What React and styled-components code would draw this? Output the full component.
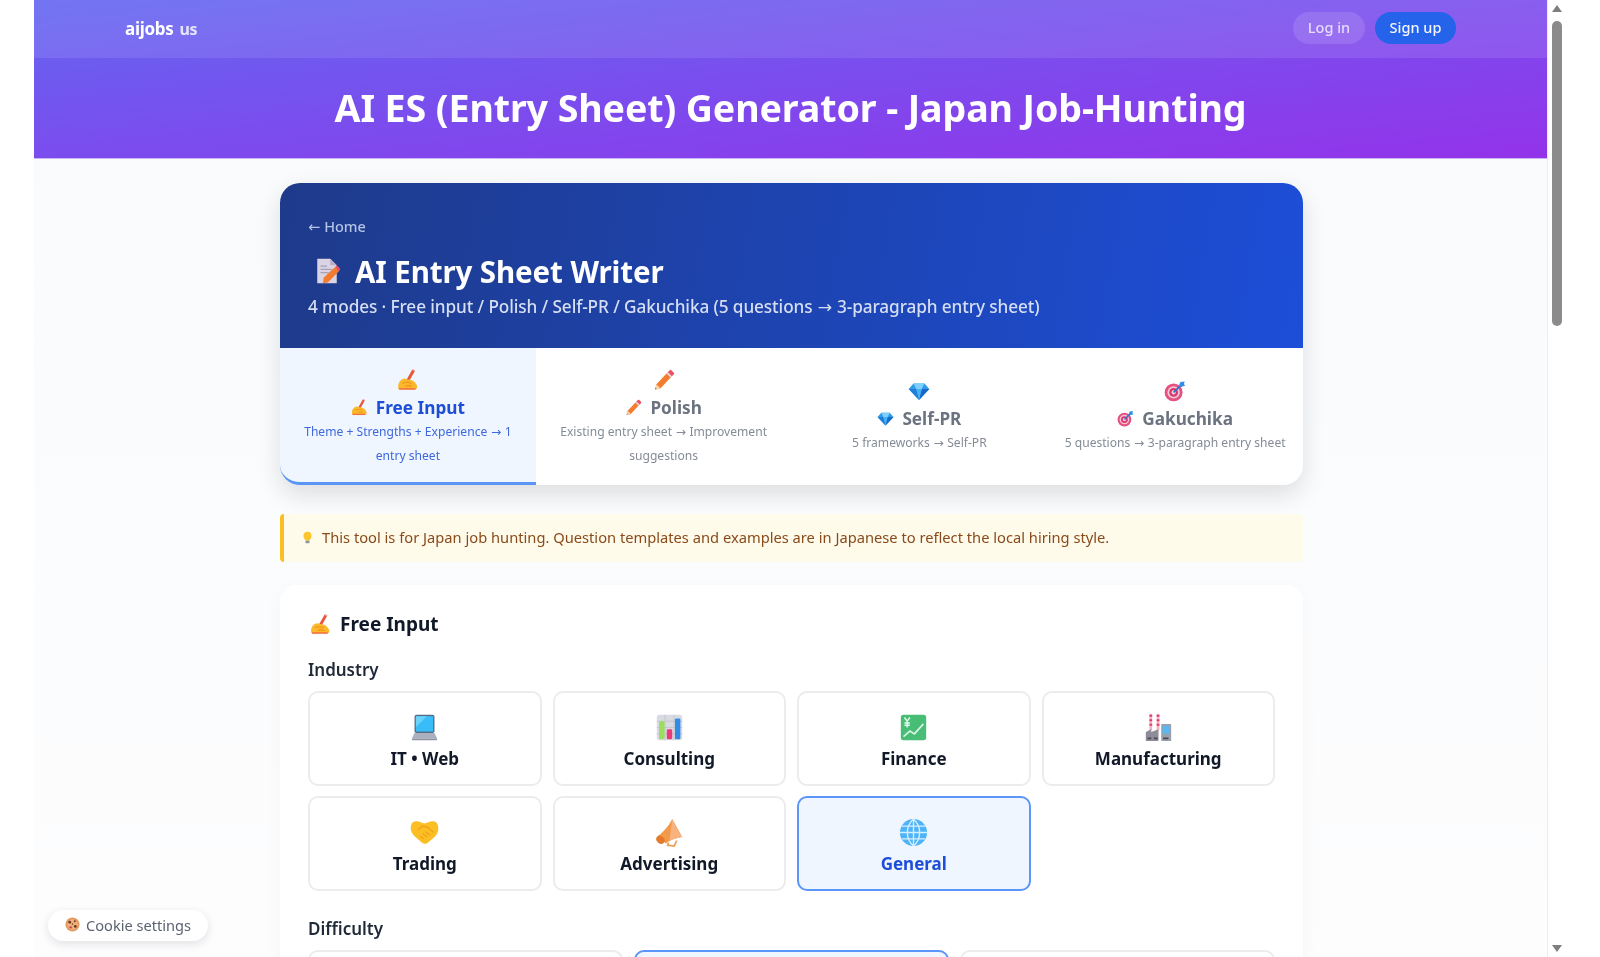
import React from "react";
import styled, { createGlobalStyle } from "styled-components";

const Global = createGlobalStyle`
  html, body { margin: 0; padding: 0; height: 957px; overflow: hidden; background: #fff; }
  * { box-sizing: border-box; }
  body { font-family: "Noto Sans", "Open Sans", "Liberation Sans", sans-serif; }
`;

const Shell = styled.div`
  display: flex;
  height: 957px;
  width: 1600px;
  overflow: hidden;
  position: relative;
  background: #fff;
  filter: blur(0.35px);
`;
const Gutter = styled.div`
  flex: 0 0 34px;
`;
const Page = styled.main`
  flex: 0 0 1514px;
  height: 957px;
  overflow: hidden;
  background: linear-gradient(180deg, #f8fafc 0, #fbfcfd 500px, #fdfdfe 100%);
  border-right: 1px solid #eceaf8;
`;
const Banner = styled.header`
  background: linear-gradient(to bottom right, #6366f1, #9333ea);
  border-bottom: 1px solid #c9b6f5;
`;
const Nav = styled.nav`
  height: 58px;
  display: flex;
  align-items: center;
  justify-content: space-between;
  padding: 0 91px 2px;
  background: rgba(255, 255, 255, 0.1);
`;
const Logo = styled.a`
  font-size: 17px;
  font-weight: 700;
  color: #fff;
  letter-spacing: -0.3px;
  display: flex;
  align-items: baseline;
  gap: 6px;
`;
const LogoTag = styled.span`
  font-size: 16px;
  font-weight: 700;
  color: #e6e4fd;
`;
const NavActions = styled.div`
  display: flex;
  gap: 10px;
`;
const Pill = styled.button`
  height: 32px;
  width: ${(p) => (p.$primary ? "81px" : "72px")};
  border: 0;
  border-radius: 16px;
  font: 500 14.5px "Noto Sans", sans-serif;
  color: ${(p) => (p.$primary ? "#f2f6ff" : "#e6dcfd")};
  background: ${(p) => (p.$primary ? "#2563eb" : "rgba(255,255,255,.12)")};
  padding: 0 0 3px;
`;
const HeroTitle = styled.h1`
  margin: 0;
  height: 100px;
  display: flex;
  align-items: center;
  justify-content: center;
  color: #fff;
  font-size: 37.6px;
  font-weight: 700;
  letter-spacing: -0.1px;
  padding-bottom: 1px;
`;
const Content = styled.div`
  width: 1023px;
  margin: 24px 0 0 246px;
`;
const ToolCard = styled.section`
  border-radius: 20px;
  background: #fff;
  box-shadow: 0 10px 24px rgba(15, 23, 42, 0.13);
`;
const ToolHead = styled.div`
  height: 165px;
  padding: 33px 28px 0;
  border-radius: 20px 20px 0 0;
  background: linear-gradient(100deg, #1e3a8a 0%, #1d4ed8 100%);
`;
const Back = styled.a`
  display: block;
  font-size: 14.5px;
  line-height: 20px;
  color: #b4c4e6;
  font-weight: 500;
`;
const ToolTitle = styled.h2`
  margin: 14px 0 0;
  display: flex;
  align-items: center;
  gap: 15px;
  padding-left: 6px;
  height: 40px;
  font-size: 29.5px;
  font-weight: 700;
  color: #fff;
  letter-spacing: -0.1px;
`;
const ToolSub = styled.p`
  margin: 4px 0 0;
  font-size: 17.2px;
  line-height: 24px;
  color: #d5def3;
  font-weight: 500;
  letter-spacing: -0.1px;
`;
const ArrowGlyph = styled.span`
  display: inline-block;
  margin: 0 0.3em;
  font-family: "DejaVu Sans", sans-serif;
`;
const BackArrow = styled.span`
  display: inline-block;
  margin-right: 4px;
  font-family: "DejaVu Sans", sans-serif;
`;
const Tabs = styled.div`
  display: grid;
  grid-template-columns: repeat(4, 1fr);
  height: 137px;
`;
const Tab = styled.button`
  border: 0;
  padding: 5px 16px 0;
  margin: 0;
  background: ${(p) => (p.$active ? "#eff6ff" : "transparent")};
  border-bottom: 3px solid ${(p) => (p.$active ? "#5b95f7" : "transparent")};
  border-radius: ${(p) => (p.$active ? "0 0 0 20px" : "0")};
  display: flex;
  flex-direction: column;
  align-items: center;
  justify-content: center;
  font-family: inherit;
`;
const TabLabel = styled.span`
  display: flex;
  align-items: center;
  gap: 8px;
  font-size: 17.2px;
  font-weight: 700;
  line-height: 25px;
  margin-top: 4px;
  color: ${(p) => (p.$active ? "#1d4ed8" : "#6b7280")};
`;
const DescLine = styled.span`
  display: block;
  white-space: nowrap;
  font-size: 12.1px;
  line-height: 23px;
  color: ${(p) => (p.$active ? "#3f68dc" : "#858b96")};
`;
const Notice = styled.div`
  height: 48px;
  margin-top: 29px;
  display: flex;
  align-items: center;
  gap: 8px;
  padding: 0 0 2px 17px;
  border-left: 4px solid #fbbf24;
  border-radius: 4px;
  background: #fffbeb;
  color: #8a4a1a;
  font-size: 14.7px;
`;
const FormCard = styled.section`
  margin-top: 23px;
  padding: 22px 28px 0;
  height: 500px;
  background: #fff;
  border-radius: 16px;
  box-shadow: 0 4px 18px rgba(15, 23, 42, 0.035);
`;
const FormTitle = styled.h3`
  margin: 0;
  display: flex;
  align-items: center;
  gap: 9px;
  padding-left: 2px;
  height: 34px;
  font-size: 19px;
  font-weight: 700;
  color: #111827;
`;
const Label = styled.div`
  font-size: 17px;
  font-weight: 600;
  line-height: 24px;
  color: #1f2937;
  margin-top: ${(p) => p.$top}px;
  margin-bottom: 9px;
`;
const Grid = styled.div`
  display: grid;
  grid-template-columns: repeat(${(p) => p.$cols}, 1fr);
  gap: 10px 11px;
`;
const Tile = styled.button`
  height: ${(p) => p.$h || 95}px;
  padding: 6px 0 0;
  border: 2px solid ${(p) => (p.$active ? "#5b95f7" : "#ececee")};
  border-radius: 10px;
  background: ${(p) => (p.$active ? "#eff6ff" : "#fff")};
  color: ${(p) => (p.$active ? "#1d4ed8" : "#111827")};
  display: flex;
  flex-direction: column;
  align-items: center;
  justify-content: center;
  gap: 5px;
  font: 700 17px/24px "Noto Sans", sans-serif;
`;
const Rail = styled.aside`
  flex: 1;
  display: flex;
  flex-direction: column;
  align-items: flex-start;
  padding: 5px 0 5px 4px;
`;
const Arrow = styled.span`
  width: 0;
  height: 0;
  margin-left: 0;
  border-left: 5px solid transparent;
  border-right: 5px solid transparent;
  ${(p) => (p.$down ? "border-top: 7px solid #7f7f7f; margin-top: auto;" : "border-bottom: 7px solid #7f7f7f;")}
`;
const Thumb = styled.span`
  width: 10px;
  height: 305px;
  margin-top: 9px;
  border-radius: 5px;
  background: #8b8b8b;
`;
const Cookie = styled.button`
  position: absolute;
  left: 48px;
  top: 910px;
  height: 31px;
  width: 160px;
  display: flex;
  align-items: center;
  justify-content: center;
  gap: 6px;
  padding: 0 0 2px;
  border: 0;
  border-radius: 16px;
  background: #fff;
  box-shadow: 0 3px 10px rgba(15, 23, 42, 0.12);
  color: #5b6270;
  font: 400 14.6px "Noto Sans", sans-serif;
`;
const Ico = styled.svg`
  display: block;
  flex: none;
`;

const drawings = {
  hand: (
    <>
      <path d="M22 1l4 2-9 16-4-2z" fill="#e8583a" />
      <path d="M22 1l1-1 4 2-1 1z" fill="#f2a3a0" />
      <path d="M2 29c-1-5 0-10 4-13 3-2 6-3 8-1l5 1c4 0 7 3 9 6 2 3 2 7-1 7z" fill="#fbb82b" />
      <path d="M8 21c4-2 9-2 13 0M12 25c3-1 7-1 10 0" stroke="#f0921d" strokeWidth="1.6" fill="none" />
      <path d="M3 29h24" stroke="#f2703d" strokeWidth="2.4" />
    </>
  ),
  pencil: (
    <>
      <path d="M5 22L21 5l6 6-16 17-8 2z" fill="#f47c30" />
      <path d="M21 5l3-3c1-1 2-1 3 0l3 3c1 1 1 2 0 3l-3 3z" fill="#ef4f63" />
      <path d="M19.5 6.5l2-2 6 6-2 2z" fill="#e3d7dc" />
      <path d="M5 22l6 6-8 2z" fill="#f6d3a8" />
      <path d="M3.8 27l1.2 1.2-2 1.8z" fill="#6b7280" />
    </>
  ),
  gem: (
    <>
      <path d="M8 5h16l7 8-15 16L1 13z" fill="#2f9bec" />
      <path d="M8 5h16l-4 8H12z" fill="#7cd0fb" />
      <path d="M1 13h11l4 16z" fill="#1f7fd8" />
      <path d="M31 13H20l-4 16z" fill="#1569c7" />
      <path d="M12 13h8l-4 16z" fill="#48b0f5" />
    </>
  ),
  dart: (
    <>
      <circle cx="14" cy="18" r="13" fill="#e4507f" />
      <circle cx="14" cy="18" r="9" fill="#f4c7d4" />
      <circle cx="14" cy="18" r="6.4" fill="#d9386f" />
      <circle cx="14" cy="18" r="3" fill="#f6d5df" />
      <path d="M14 18L26 6" stroke="#2c6fd1" strokeWidth="2.4" />
      <path d="M24 3l6-1-1 4 2 2-6 2-3-3z" fill="#2f8fe8" />
    </>
  ),
  laptop: (
    <>
      <rect x="5" y="2" width="22" height="20" rx="2" fill="#5a6a86" />
      <rect x="6.5" y="3.5" width="19" height="17" fill="#38bdf8" />
      <path d="M6.5 3.5h12l-12 12z" fill="#6cd3fb" />
      <path d="M5 22h22l3 6H2z" fill="#aab0bd" />
      <rect x="2" y="28" width="28" height="2" rx="1" fill="#8c93a3" />
    </>
  ),
  chart: (
    <>
      <rect x="2" y="2" width="28" height="28" rx="3" fill="#d9dbe3" />
      <path d="M2 9h28M2 16h28M2 23h28M11 2v28M21 2v28" stroke="#c2c5cf" strokeWidth="1" />
      <rect x="4.5" y="9" width="6" height="20" rx="1.5" fill="#9ade5c" />
      <rect x="13" y="18" width="6" height="11" rx="1.5" fill="#ea3a77" />
      <rect x="22" y="6" width="6" height="23" rx="1.5" fill="#2f8be6" />
    </>
  ),
  finance: (
    <>
      <rect x="2" y="2" width="28" height="28" rx="3" fill="#47bd75" />
      <path d="M5 26l7-6 5 3 10-11" stroke="#d9f5e3" strokeWidth="1.8" fill="none" />
      <path d="M6 5l3 4 3-4M9 9v7M6 11h6M6 13.5h6" stroke="#e8f8ee" strokeWidth="1.6" fill="none" />
    </>
  ),
  factory: (
    <>
      <rect x="6" y="1" width="3" height="18" fill="#f4b3c4" />
      <rect x="14" y="1" width="3" height="18" fill="#f4b3c4" />
      <path d="M6 3h3M6 8h3M6 13h3M14 3h3M14 8h3M14 13h3" stroke="#e23c6c" strokeWidth="2.4" />
      <path d="M2 31V21l6-3v3l8-3v13z" fill="#8f8c99" />
      <rect x="19" y="12" width="11" height="19" rx="1" fill="#9aa0ab" />
      <rect x="20.5" y="14" width="8" height="9" fill="#5cb7ee" />
      <path d="M4 28h4M11 28h4M21 28h6" stroke="#4a4753" strokeWidth="2" />
    </>
  ),
  handshake: (
    <>
      <path d="M1 9C2 4 6 3 10 4l6 2 6-2c4-1 8 0 9 5 1 5-1 9-4 12l-7 6c-2 2-5 2-7 0l-7-6C3 18 0 14 1 9z" fill="#fbbf24" />
      <path d="M9 13l5-4 5 1 7 6M11 20l4 3M14 17l5 4M17 15l5 4" stroke="#ef9f1a" strokeWidth="1.3" fill="none" />
    </>
  ),
  megaphone: (
    <>
      <path d="M19 1c-3 6-8 13-16 19l9 8c7-5 13-6 18-7z" fill="#f29a4c" />
      <path d="M19 1c3 6 7 14 11 20-5 1-10 2-14 4z" fill="#f7b27e" />
      <ellipse cx="6" cy="24" rx="5" ry="4" transform="rotate(42 6 24)" fill="#e4792a" />
      <path d="M15 27l-1 3 7 1 3-6" stroke="#e9a360" strokeWidth="2" fill="none" />
    </>
  ),
  globe: (
    <>
      <circle cx="16" cy="16" r="15" fill="#4fb4f7" />
      <path d="M1 16h30M3 9h26M3 23h26M16 1v30M16 1c-9 8-9 22 0 30M16 1c9 8 9 22 0 30" stroke="#d5eefd" strokeWidth="1.5" fill="none" />
    </>
  ),
  bulb: (
    <>
      <path d="M16 2c6 0 10 4 10 10 0 5-4 7-5 12H11c-1-5-5-7-5-12C6 6 10 2 16 2z" fill="#fcc52e" />
      <rect x="11" y="24" width="10" height="6" rx="2" fill="#8f96a3" />
    </>
  ),
  memo: (
    <>
      <path d="M4 1h16l8 8v22H4z" fill="#dbd4e4" />
      <path d="M20 1l8 8h-8z" fill="#b7adc6" />
      <path d="M8 10h8M8 14h14M8 18h10" stroke="#a8a0b5" strokeWidth="1.4" />
      <path d="M12 24L26 11l5 5-14 14-6 1z" fill="#f47c30" />
      <path d="M26 11l2-2 5 5-2 2z" fill="#ef4f63" />
    </>
  ),
  cookie: (
    <>
      <circle cx="16" cy="16" r="15" fill="#e39a5f" />
      <circle cx="16" cy="16" r="11" fill="#eeb07c" />
      <circle cx="10" cy="11" r="3" fill="#6b3a24" />
      <circle cx="21" cy="9" r="2" fill="#6b3a24" />
      <circle cx="22" cy="20" r="3" fill="#6b3a24" />
      <circle cx="12" cy="22" r="2.5" fill="#c4445a" />
      <circle cx="16" cy="15" r="1.6" fill="#6b3a24" />
    </>
  ),
};

const Emoji = ({ name, size }) => (
  <Ico viewBox="0 0 32 32" width={size} height={size} aria-hidden="true">
    {drawings[name]}
  </Ico>
);

const To = () => <ArrowGlyph>→</ArrowGlyph>;

const modes = [
  {
    icon: "hand",
    label: "Free Input",
    active: true,
    lines: [<>Theme + Strengths + Experience<To />1</>, "entry sheet"],
  },
  {
    icon: "pencil",
    label: "Polish",
    lines: [<>Existing entry sheet<To />Improvement</>, "suggestions"],
  },
  { icon: "gem", label: "Self-PR", lines: [<>5 frameworks<To />Self-PR</>] },
  { icon: "dart", label: "Gakuchika", lines: [<>5 questions<To />3-paragraph entry sheet</>] },
];

const industries = [
  { icon: "laptop", label: "IT • Web" },
  { icon: "chart", label: "Consulting" },
  { icon: "finance", label: "Finance" },
  { icon: "factory", label: "Manufacturing" },
  { icon: "handshake", label: "Trading" },
  { icon: "megaphone", label: "Advertising" },
  { icon: "globe", label: "General", active: true },
];

export default function App() {
  return (
    <>
      <Global />
      <Shell>
        <Gutter />
        <Page>
          <Banner>
            <Nav>
              <Logo>
                aijobs<LogoTag>us</LogoTag>
              </Logo>
              <NavActions>
                <Pill>Log in</Pill>
                <Pill $primary>Sign up</Pill>
              </NavActions>
            </Nav>
            <HeroTitle>AI ES (Entry Sheet) Generator - Japan Job-Hunting</HeroTitle>
          </Banner>
          <Content>
            <ToolCard>
              <ToolHead>
                <Back><BackArrow>←</BackArrow>Home</Back>
                <ToolTitle>
                  <Emoji name="memo" size={26} />
                  AI Entry Sheet Writer
                </ToolTitle>
                <ToolSub>4 modes · Free input / Polish / Self-PR / Gakuchika (5 questions<To />3-paragraph entry sheet)</ToolSub>
              </ToolHead>
              <Tabs>
                {modes.map((m) => (
                  <Tab key={m.label} $active={m.active}>
                    <Emoji name={m.icon} size={22} />
                    <TabLabel $active={m.active}>
                      <Emoji name={m.icon} size={17} />
                      {m.label}
                    </TabLabel>
                    {m.lines.map((line, n) => (
                      <DescLine key={n} $active={m.active}>{line}</DescLine>
                    ))}
                  </Tab>
                ))}
              </Tabs>
            </ToolCard>
            <Notice>
              <Emoji name="bulb" size={13} />
              This tool is for Japan job hunting. Question templates and examples are in Japanese to reflect the local hiring style.
            </Notice>
            <FormCard>
              <FormTitle>
                <Emoji name="hand" size={21} />
                Free Input
              </FormTitle>
              <Label $top={17}>Industry</Label>
              <Grid $cols={4}>
                {industries.map((i) => (
                  <Tile key={i.label} $active={i.active}>
                    <Emoji name={i.icon} size={29} />
                    {i.label}
                  </Tile>
                ))}
              </Grid>
              <Label $top={26}>Difficulty</Label>
              <Grid $cols={3}>
                <Tile $h={80} aria-label="Easy" />
                <Tile $h={80} $active aria-label="Standard" />
                <Tile $h={80} aria-label="Hard" />
              </Grid>
            </FormCard>
          </Content>
        </Page>
        <Rail>
          <Arrow />
          <Thumb />
          <Arrow $down />
        </Rail>
        <Cookie>
          <Emoji name="cookie" size={15} />
          Cookie settings
        </Cookie>
      </Shell>
    </>
  );
}
